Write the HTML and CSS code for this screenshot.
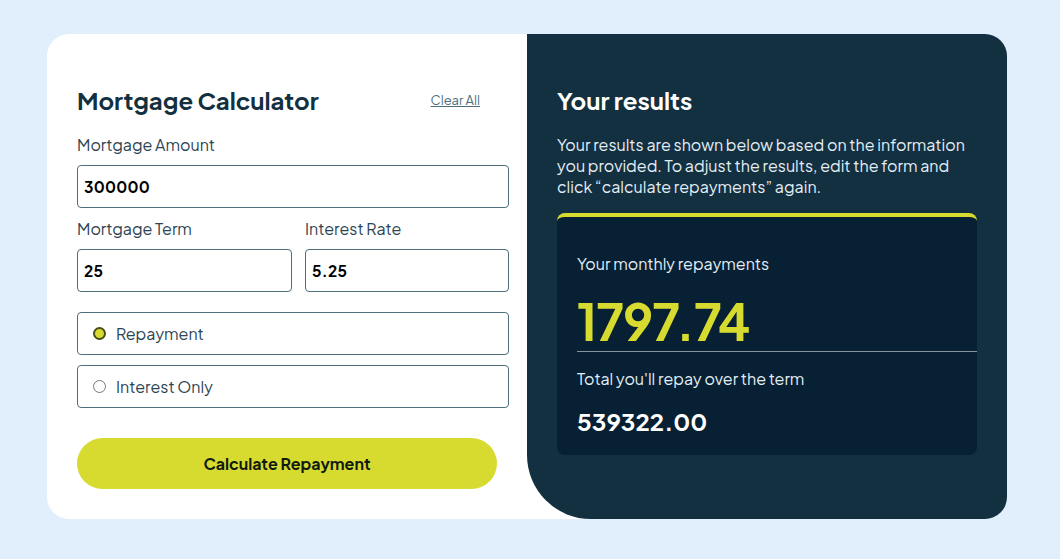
FILE: index.html
```html
<!DOCTYPE html>
<html lang="en">
<head>
<meta charset="utf-8">
<title>Mortgage Calculator</title>
<link rel="stylesheet" href="styles.css">
</head>
<body>
<main class="card">
  <section class="form-panel">
    <header class="form-head">
      <h1 class="title">Mortgage Calculator</h1>
      <a class="clear" href="#">Clear All</a>
    </header>
    <label class="label">Mortgage Amount</label>
    <div class="input">300000</div>
    <div class="row">
      <div class="col col-term">
        <label class="label">Mortgage Term</label>
        <div class="input">25</div>
      </div>
      <div class="col col-rate">
        <label class="label">Interest Rate</label>
        <div class="input">5.25</div>
      </div>
    </div>
    <div class="radios">
      <div class="radio-box"><span class="dot dot-on"></span><span>Repayment</span></div>
      <div class="radio-box"><span class="dot"></span><span>Interest Only</span></div>
    </div>
    <button class="btn">Calculate Repayment</button>
  </section>
  <section class="result-panel">
    <h2 class="title title-light">Your results</h2>
    <p class="desc">Your results are shown below based on the information you provided. To adjust the results, edit the form and click “calculate repayments” again.</p>
    <div class="result-box">
      <div class="r-label">Your monthly repayments</div>
      <div class="r-big">1797.74</div>
      <div class="divider"></div>
      <div class="r-label r-label2">Total you'll repay over the term</div>
      <div class="r-total">539322.00</div>
    </div>
  </section>
</main>
</body>
</html>
```
FILE: styles.css
```css
* { box-sizing: border-box; }
html, body { margin: 0; padding: 0; }
body {
  background: #e0effb;
  font-family: "Plus Jakarta Sans", Inter, "Noto Sans", sans-serif;
  color: #133041;
  width: 1060px;
  height: 559px;
  padding: 34px 0 0 47px;
}
.card {
  display: flex;
  width: 960px;
  height: 485px;
  background: #fff;
  border-radius: 22px;
}
.form-panel {
  width: 480px;
  padding: 51px 18px 30px 30px;
  display: flex;
  flex-direction: column;
}
.form-head {
  display: flex;
  justify-content: space-between;
  align-items: center;
  margin-right: 29px;
  height: 30px;
}
.title {
  margin: 0;
  font-size: 24px;
  font-weight: 700;
  line-height: 30px;
  color: #133041;
}
.clear {
  font-size: 13px;
  color: #4e6e7e;
  text-decoration: underline;
}
.label {
  display: block;
  font-size: 16px;
  line-height: 20px;
  color: #2c4554;
  margin-top: 20px;
  margin-bottom: 10px;
}
.row {
  display: flex;
  gap: 13px;
}
.row .label { margin-top: 11px; }
.col-term { width: 215px; }
.col-rate { width: 204px; }
.input {
  height: 43px;
  border: 1px solid #4e6e7e;
  border-radius: 4px;
  padding: 0 6px;
  display: flex;
  align-items: center;
  font-size: 15.5px;
  font-weight: 700;
  color: #000;
  letter-spacing: 0.3px;
}
.radios {
  display: flex;
  flex-direction: column;
  gap: 10px;
  margin-top: 20px;
}
.radio-box {
  height: 43px;
  border: 1px solid #4e6e7e;
  border-radius: 4px;
  display: flex;
  align-items: center;
  padding-left: 15px;
  gap: 10px;
  font-size: 16px;
  color: #2c4554;
}
.dot {
  width: 13px;
  height: 13px;
  border-radius: 50%;
  border: 1px solid #777;
  background: #fff;
}
.dot-on {
  border: 2px solid #4a4d14;
  background: #d8db2f;
}
.btn {
  margin-top: 30px;
  width: 420px;
  height: 51px;
  border: none;
  border-radius: 26px;
  background: #d8db2f;
  font-family: inherit;
  font-size: 16px;
  font-weight: 700;
  color: #101a10;
}
.result-panel {
  width: 480px;
  background: #133041;
  border-radius: 0 22px 22px 64px;
  padding: 51px 30px 30px 30px;
  color: #fff;
}
.title-light { color: #fff; }
.desc {
  margin: 19px 0 16px;
  font-size: 16px;
  line-height: 21px;
  color: #e3eef6;
}
.result-box {
  width: 420px;
  background: #072033;
  border-top: 4px solid #d8db2f;
  border-radius: 8px;
  padding: 37px 0 18px 20px;
}
.r-label {
  font-size: 16px;
  line-height: 20px;
  color: #e3eef6;
}
.r-big {
  margin-top: 17px;
  font-size: 50px;
  line-height: 60px;
  font-weight: 700;
  color: #d8db2f;
  letter-spacing: -1px;
}
.divider {
  height: 1px;
  background: #8795a0;
}
.r-label2 { margin-top: 17px; }
.r-total {
  margin-top: 16px;
  font-size: 24px;
  line-height: 32px;
  font-weight: 700;
  color: #fff;
}
```
